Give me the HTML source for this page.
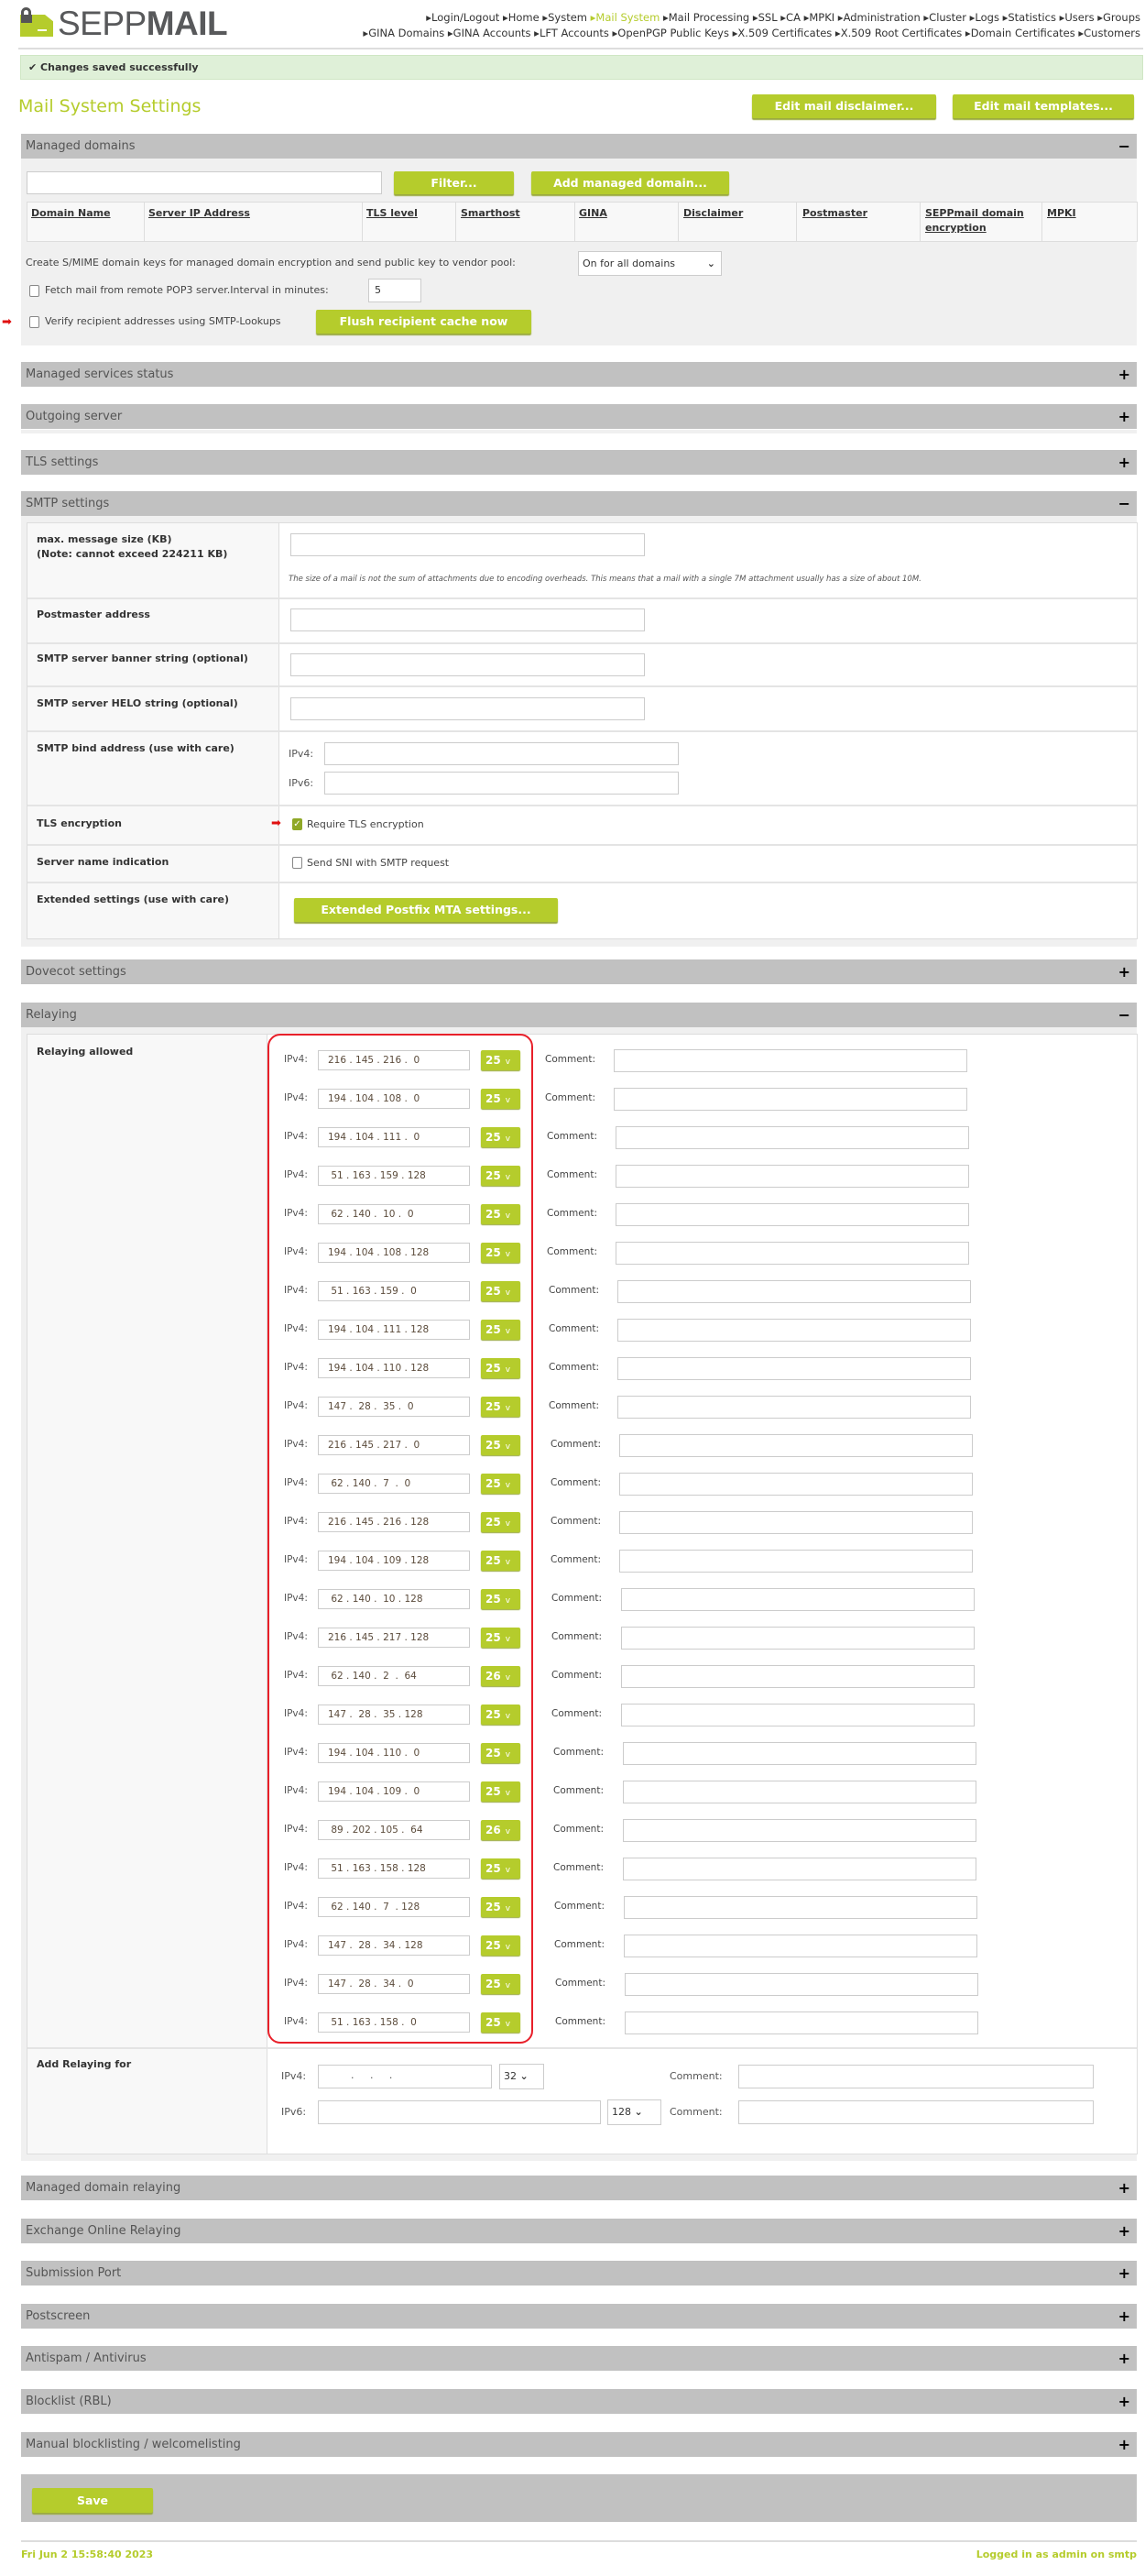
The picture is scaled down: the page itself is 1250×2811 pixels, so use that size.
<!DOCTYPE html>
<html><head><meta charset="utf-8"><style>
*{box-sizing:border-box}
body{margin:0;width:1250px;height:2811px;position:relative;background:#fff;font-family:"DejaVu Sans","Liberation Sans",sans-serif;font-size:11px;color:#333;overflow:hidden}
.a{position:absolute}
.h{position:absolute;left:23px;width:1218px;height:27px;background:#c1c1c1;color:#555;font-size:13px;line-height:27px;padding-left:5px}
.h b{position:absolute;right:7px;top:0;font-size:16px;color:#000;font-weight:bold}
.btn{position:absolute;background:#b5cc2c;color:#fff;font-weight:bold;font-size:12.5px;text-align:center;border-radius:2px;box-shadow:0 2px 1px #9aaa40}
.inp{position:absolute;background:#fff;border:1px solid #ccc;height:25px}
.sel{position:absolute;background:#fff;border:1px solid #ccc;font-size:11px;padding-left:4px}
.lbl{position:absolute;font-weight:bold;color:#333;font-size:11px}
.th span{text-decoration:underline}
.r{position:absolute;left:0;width:1250px;height:22px}
.r .l{position:absolute;left:310px;top:4px;color:#555;font-size:10.5px}
.r .ip{position:absolute;left:347px;top:0;width:166px;height:22px;border:1px solid #ccc;background:#fff;color:#5b4b3b;font-size:10.5px;line-height:20px;white-space:pre;padding-left:10px}
.r .pf{position:absolute;left:525px;top:0;width:43px;height:22px;background:#b5cc2c;color:#fff;font-weight:bold;font-size:12px;line-height:22px;padding-left:5px;border-radius:2px;box-shadow:0 1px 1px #9aaa40}
.r .pf i{font-style:normal;font-weight:normal;font-size:9px;margin-left:5px}
.r .cl{position:absolute;top:4px;color:#444;font-size:10.5px}
.r .ci{position:absolute;top:-1px;width:386px;height:25px;border:1px solid #ccc;background:#fff}
.cb{position:absolute;width:11px;height:13px;border:1px solid #888;border-radius:2px;background:#fff}
</style></head><body>

<!-- Logo -->
<div class="a" style="left:23px;top:8px;width:11px;height:12px;border:3px solid #555;border-radius:6px 6px 0 0;border-bottom:none"></div>
<div class="a" style="left:22px;top:16px;width:36px;height:24px;background:#b5cc2c;clip-path:polygon(0 0,75% 0,100% 30%,100% 100%,0 100%)"></div>
<div class="a" style="left:23px;top:16px;width:12px;height:9px;background:#555"></div>
<div class="a" style="left:41px;top:32px;width:10px;height:2px;background:#fff"></div>
<div class="a" style="left:63px;top:6px;font-family:'Liberation Sans',sans-serif;font-size:37px;color:#58595b;letter-spacing:-0.5px;line-height:40px"><span style="font-weight:normal">SEPP</span><span style="font-weight:bold">MAIL</span></div>

<!-- Nav -->
<div class="a" style="right:5px;top:11px;font-size:11.5px;white-space:nowrap;text-align:right;line-height:17px;color:#333">
▸Login/Logout ▸Home ▸System <span style="color:#b5cc2c">▸Mail System</span> ▸Mail Processing ▸SSL ▸CA ▸MPKI ▸Administration ▸Cluster ▸Logs ▸Statistics ▸Users ▸Groups<br>
▸GINA Domains ▸GINA Accounts ▸LFT Accounts ▸OpenPGP Public Keys ▸X.509 Certificates ▸X.509 Root Certificates ▸Domain Certificates ▸Customers</div>
<div class="a" style="left:20px;top:52px;width:1228px;height:2px;background:#ddd"></div>

<!-- success -->
<div class="a" style="left:22px;top:60px;width:1226px;height:27px;background:#dff0d8;border:1px solid #cfe6c4;font-weight:bold;font-size:11px;line-height:25px;padding-left:8px;color:#333">✔ Changes saved successfully</div>

<div class="a" style="left:20px;top:103px;font-size:19px;color:#b5cc2c;line-height:26px">Mail System Settings</div>
<div class="btn" style="left:821px;top:103px;width:201px;height:26px;line-height:26px">Edit mail disclaimer...</div>
<div class="btn" style="left:1040px;top:103px;width:198px;height:26px;line-height:26px">Edit mail templates...</div>

<!-- Managed domains -->
<div class="h" style="top:146px">Managed domains<b>−</b></div>
<div class="a" style="left:23px;top:173px;width:1218px;height:204px;background:#f0f0f0"></div>
<div class="inp" style="left:29px;top:187px;width:388px;height:25px"></div>
<div class="btn" style="left:430px;top:187px;width:131px;height:25px;line-height:25px">Filter...</div>
<div class="btn" style="left:580px;top:187px;width:216px;height:25px;line-height:25px">Add managed domain...</div>
<div class="a" style="left:29px;top:220px;width:1213px;height:44px;background:#f8f8f8;border:1px solid #ddd"></div>
<div class="a th" style="top:225px;left:0;width:1250px;font-weight:bold;font-size:11px;color:#333;line-height:16px">
<span class="a" style="left:34px">Domain Name</span><span class="a" style="left:162px">Server IP Address</span><span class="a" style="left:400px">TLS level</span><span class="a" style="left:503px">Smarthost</span><span class="a" style="left:632px">GINA</span><span class="a" style="left:746px">Disclaimer</span><span class="a" style="left:876px">Postmaster</span><span class="a" style="left:1010px">SEPPmail domain<br>encryption</span><span class="a" style="left:1143px">MPKI</span></div>
<div class="a" style="left:157px;top:221px;width:1px;height:42px;background:#ddd"></div>
<div class="a" style="left:395px;top:221px;width:1px;height:42px;background:#ddd"></div>
<div class="a" style="left:497px;top:221px;width:1px;height:42px;background:#ddd"></div>
<div class="a" style="left:627px;top:221px;width:1px;height:42px;background:#ddd"></div>
<div class="a" style="left:740px;top:221px;width:1px;height:42px;background:#ddd"></div>
<div class="a" style="left:869px;top:221px;width:1px;height:42px;background:#ddd"></div>
<div class="a" style="left:1004px;top:221px;width:1px;height:42px;background:#ddd"></div>
<div class="a" style="left:1137px;top:221px;width:1px;height:42px;background:#ddd"></div>
<div class="a" style="left:28px;top:280px;color:#444">Create S/MIME domain keys for managed domain encryption and send public key to vendor pool:</div>
<div class="sel" style="left:631px;top:274px;width:157px;height:27px;line-height:25px">On for all domains <span style="float:right;margin-right:6px;font-weight:bold">⌄</span></div>
<div class="cb" style="left:32px;top:311px"></div>
<div class="a" style="left:49px;top:310px;color:#444">Fetch mail from remote POP3 server.Interval in minutes:</div>
<div class="inp" style="left:402px;top:304px;width:58px;height:26px;padding:5px 0 0 6px">5</div>
<div class="a" style="left:2px;top:345px;color:#e01010;font-size:13px;line-height:13px">➡</div>
<div class="cb" style="left:32px;top:345px"></div>
<div class="a" style="left:49px;top:344px;color:#444">Verify recipient addresses using SMTP-Lookups</div>
<div class="btn" style="left:345px;top:338px;width:235px;height:26px;line-height:26px">Flush recipient cache now</div>

<div class="h" style="top:395px">Managed services status<b>+</b></div>
<div class="h" style="top:441px">Outgoing server<b>+</b></div>
<div class="a" style="left:23px;top:469px;width:1218px;height:4px;background:#f0f0f0"></div>
<div class="h" style="top:491px">TLS settings<b>+</b></div>

<!-- SMTP -->
<div class="h" style="top:536px">SMTP settings<b>−</b></div>
<div class="a" style="left:23px;top:563px;width:1218px;height:470px;background:#f0f0f0"></div>
<div class="a" style="left:29px;top:570px;width:1213px;height:455px;background:#fff;border:1px solid #ddd"></div>
<div class="a" style="left:30px;top:571px;width:275px;height:453px;background:#f8f8f8;border-right:1px solid #ddd"></div>
<div class="a" style="left:30px;top:652px;width:1211px;height:2px;background:#e4e4e4"></div>
<div class="a" style="left:30px;top:701px;width:1211px;height:2px;background:#e4e4e4"></div>
<div class="a" style="left:30px;top:748px;width:1211px;height:2px;background:#e4e4e4"></div>
<div class="a" style="left:30px;top:797px;width:1211px;height:2px;background:#e4e4e4"></div>
<div class="a" style="left:30px;top:878px;width:1211px;height:2px;background:#e4e4e4"></div>
<div class="a" style="left:30px;top:921px;width:1211px;height:2px;background:#e4e4e4"></div>
<div class="a" style="left:30px;top:962px;width:1211px;height:2px;background:#e4e4e4"></div>
<div class="lbl" style="left:40px;top:581px;line-height:16px">max. message size (KB)<br>(Note: cannot exceed 224211 KB)</div>
<div class="inp" style="left:317px;top:582px;width:387px"></div>
<div class="a" style="left:315px;top:627px;font-size:8.5px;font-style:italic;color:#555">The size of a mail is not the sum of attachments due to encoding overheads. This means that a mail with a single 7M attachment usually has a size of about 10M.</div>
<div class="lbl" style="left:40px;top:664px">Postmaster address</div>
<div class="inp" style="left:317px;top:664px;width:387px"></div>
<div class="lbl" style="left:40px;top:712px">SMTP server banner string (optional)</div>
<div class="inp" style="left:317px;top:713px;width:387px"></div>
<div class="lbl" style="left:40px;top:761px">SMTP server HELO string (optional)</div>
<div class="inp" style="left:317px;top:761px;width:387px"></div>
<div class="lbl" style="left:40px;top:810px">SMTP bind address (use with care)</div>
<div class="a" style="left:315px;top:816px;color:#555">IPv4:</div>
<div class="inp" style="left:354px;top:810px;width:387px"></div>
<div class="a" style="left:315px;top:848px;color:#555">IPv6:</div>
<div class="inp" style="left:354px;top:842px;width:387px"></div>
<div class="lbl" style="left:40px;top:892px">TLS encryption</div>
<div class="a" style="left:296px;top:892px;color:#e01010;font-size:13px;line-height:13px">➡</div>
<div class="a" style="left:319px;top:893px;width:11px;height:13px;background:#8fa828;border-radius:2px;color:#fff;font-size:10px;line-height:13px;text-align:center">✓</div>
<div class="a" style="left:335px;top:893px;color:#444">Require TLS encryption</div>
<div class="lbl" style="left:40px;top:934px">Server name indication</div>
<div class="cb" style="left:319px;top:935px"></div>
<div class="a" style="left:335px;top:935px;color:#444">Send SNI with SMTP request</div>
<div class="lbl" style="left:40px;top:975px">Extended settings (use with care)</div>
<div class="btn" style="left:321px;top:980px;width:288px;height:26px;line-height:26px">Extended Postfix MTA settings...</div>

<div class="h" style="top:1047px">Dovecot settings<b>+</b></div>

<!-- Relaying -->
<div class="h" style="top:1094px">Relaying<b>−</b></div>
<div class="a" style="left:23px;top:1121px;width:1218px;height:1237px;background:#f0f0f0"></div>
<div class="a" style="left:29px;top:1128px;width:1213px;height:1223px;background:#fff;border:1px solid #ddd"></div>
<div class="a" style="left:30px;top:1129px;width:262px;height:1221px;background:#f8f8f8;border-right:1px solid #ddd"></div>
<div class="a" style="left:30px;top:2234px;width:1211px;height:2px;background:#e4e4e4"></div>
<div class="lbl" style="left:40px;top:1141px">Relaying allowed</div>
<div class="a" style="left:292px;top:1128px;width:290px;height:1102px;border:2px solid #e8202a;border-radius:14px"></div>

<div class="r" style="top:1146px"><span class="l">IPv4:</span><span class="ip">216 . 145 . 216 .  0</span><span class="pf">25<i>v</i></span><span class="cl" style="left:595px">Comment:</span><span class="ci" style="left:670px"></span></div>
<div class="r" style="top:1188px"><span class="l">IPv4:</span><span class="ip">194 . 104 . 108 .  0</span><span class="pf">25<i>v</i></span><span class="cl" style="left:595px">Comment:</span><span class="ci" style="left:670px"></span></div>
<div class="r" style="top:1230px"><span class="l">IPv4:</span><span class="ip">194 . 104 . 111 .  0</span><span class="pf">25<i>v</i></span><span class="cl" style="left:597px">Comment:</span><span class="ci" style="left:672px"></span></div>
<div class="r" style="top:1272px"><span class="l">IPv4:</span><span class="ip"> 51 . 163 . 159 . 128</span><span class="pf">25<i>v</i></span><span class="cl" style="left:597px">Comment:</span><span class="ci" style="left:672px"></span></div>
<div class="r" style="top:1314px"><span class="l">IPv4:</span><span class="ip"> 62 . 140 .  10 .  0</span><span class="pf">25<i>v</i></span><span class="cl" style="left:597px">Comment:</span><span class="ci" style="left:672px"></span></div>
<div class="r" style="top:1356px"><span class="l">IPv4:</span><span class="ip">194 . 104 . 108 . 128</span><span class="pf">25<i>v</i></span><span class="cl" style="left:597px">Comment:</span><span class="ci" style="left:672px"></span></div>
<div class="r" style="top:1398px"><span class="l">IPv4:</span><span class="ip"> 51 . 163 . 159 .  0</span><span class="pf">25<i>v</i></span><span class="cl" style="left:599px">Comment:</span><span class="ci" style="left:674px"></span></div>
<div class="r" style="top:1440px"><span class="l">IPv4:</span><span class="ip">194 . 104 . 111 . 128</span><span class="pf">25<i>v</i></span><span class="cl" style="left:599px">Comment:</span><span class="ci" style="left:674px"></span></div>
<div class="r" style="top:1482px"><span class="l">IPv4:</span><span class="ip">194 . 104 . 110 . 128</span><span class="pf">25<i>v</i></span><span class="cl" style="left:599px">Comment:</span><span class="ci" style="left:674px"></span></div>
<div class="r" style="top:1524px"><span class="l">IPv4:</span><span class="ip">147 .  28 .  35 .  0</span><span class="pf">25<i>v</i></span><span class="cl" style="left:599px">Comment:</span><span class="ci" style="left:674px"></span></div>
<div class="r" style="top:1566px"><span class="l">IPv4:</span><span class="ip">216 . 145 . 217 .  0</span><span class="pf">25<i>v</i></span><span class="cl" style="left:601px">Comment:</span><span class="ci" style="left:676px"></span></div>
<div class="r" style="top:1608px"><span class="l">IPv4:</span><span class="ip"> 62 . 140 .  7  .  0</span><span class="pf">25<i>v</i></span><span class="cl" style="left:601px">Comment:</span><span class="ci" style="left:676px"></span></div>
<div class="r" style="top:1650px"><span class="l">IPv4:</span><span class="ip">216 . 145 . 216 . 128</span><span class="pf">25<i>v</i></span><span class="cl" style="left:601px">Comment:</span><span class="ci" style="left:676px"></span></div>
<div class="r" style="top:1692px"><span class="l">IPv4:</span><span class="ip">194 . 104 . 109 . 128</span><span class="pf">25<i>v</i></span><span class="cl" style="left:601px">Comment:</span><span class="ci" style="left:676px"></span></div>
<div class="r" style="top:1734px"><span class="l">IPv4:</span><span class="ip"> 62 . 140 .  10 . 128</span><span class="pf">25<i>v</i></span><span class="cl" style="left:602px">Comment:</span><span class="ci" style="left:678px"></span></div>
<div class="r" style="top:1776px"><span class="l">IPv4:</span><span class="ip">216 . 145 . 217 . 128</span><span class="pf">25<i>v</i></span><span class="cl" style="left:602px">Comment:</span><span class="ci" style="left:678px"></span></div>
<div class="r" style="top:1818px"><span class="l">IPv4:</span><span class="ip"> 62 . 140 .  2  .  64</span><span class="pf">26<i>v</i></span><span class="cl" style="left:602px">Comment:</span><span class="ci" style="left:678px"></span></div>
<div class="r" style="top:1860px"><span class="l">IPv4:</span><span class="ip">147 .  28 .  35 . 128</span><span class="pf">25<i>v</i></span><span class="cl" style="left:602px">Comment:</span><span class="ci" style="left:678px"></span></div>
<div class="r" style="top:1902px"><span class="l">IPv4:</span><span class="ip">194 . 104 . 110 .  0</span><span class="pf">25<i>v</i></span><span class="cl" style="left:604px">Comment:</span><span class="ci" style="left:680px"></span></div>
<div class="r" style="top:1944px"><span class="l">IPv4:</span><span class="ip">194 . 104 . 109 .  0</span><span class="pf">25<i>v</i></span><span class="cl" style="left:604px">Comment:</span><span class="ci" style="left:680px"></span></div>
<div class="r" style="top:1986px"><span class="l">IPv4:</span><span class="ip"> 89 . 202 . 105 .  64</span><span class="pf">26<i>v</i></span><span class="cl" style="left:604px">Comment:</span><span class="ci" style="left:680px"></span></div>
<div class="r" style="top:2028px"><span class="l">IPv4:</span><span class="ip"> 51 . 163 . 158 . 128</span><span class="pf">25<i>v</i></span><span class="cl" style="left:604px">Comment:</span><span class="ci" style="left:680px"></span></div>
<div class="r" style="top:2070px"><span class="l">IPv4:</span><span class="ip"> 62 . 140 .  7  . 128</span><span class="pf">25<i>v</i></span><span class="cl" style="left:605px">Comment:</span><span class="ci" style="left:681px"></span></div>
<div class="r" style="top:2112px"><span class="l">IPv4:</span><span class="ip">147 .  28 .  34 . 128</span><span class="pf">25<i>v</i></span><span class="cl" style="left:605px">Comment:</span><span class="ci" style="left:681px"></span></div>
<div class="r" style="top:2154px"><span class="l">IPv4:</span><span class="ip">147 .  28 .  34 .  0</span><span class="pf">25<i>v</i></span><span class="cl" style="left:606px">Comment:</span><span class="ci" style="left:682px"></span></div>
<div class="r" style="top:2196px"><span class="l">IPv4:</span><span class="ip"> 51 . 163 . 158 .  0</span><span class="pf">25<i>v</i></span><span class="cl" style="left:606px">Comment:</span><span class="ci" style="left:682px"></span></div>

<div class="lbl" style="left:40px;top:2246px">Add Relaying for</div>
<div class="a" style="left:307px;top:2259px;color:#555">IPv4:</div>
<div class="inp" style="left:347px;top:2253px;width:190px;height:26px;white-space:pre;padding:4px 0 0 0;font-size:11px;color:#555">          .     .     .</div>
<div class="sel" style="left:545px;top:2252px;width:49px;height:28px;line-height:26px">32 <b>⌄</b></div>
<div class="a" style="left:731px;top:2259px;color:#555">Comment:</div>
<div class="inp" style="left:806px;top:2253px;width:388px;height:26px"></div>
<div class="a" style="left:307px;top:2298px;color:#555">IPv6:</div>
<div class="inp" style="left:347px;top:2292px;width:309px;height:26px"></div>
<div class="sel" style="left:663px;top:2291px;width:59px;height:28px;line-height:26px">128 <b>⌄</b></div>
<div class="a" style="left:731px;top:2298px;color:#555">Comment:</div>
<div class="inp" style="left:806px;top:2292px;width:388px;height:26px"></div>

<div class="h" style="top:2374px">Managed domain relaying<b>+</b></div>
<div class="h" style="top:2421px">Exchange Online Relaying<b>+</b></div>
<div class="h" style="top:2467px">Submission Port<b>+</b></div>
<div class="h" style="top:2514px">Postscreen<b>+</b></div>
<div class="h" style="top:2560px">Antispam / Antivirus<b>+</b></div>
<div class="h" style="top:2607px">Blocklist (RBL)<b>+</b></div>
<div class="h" style="top:2654px">Manual blocklisting / welcomelisting<b>+</b></div>

<div class="a" style="left:23px;top:2700px;width:1218px;height:52px;background:#c1c1c1"></div>
<div class="btn" style="left:35px;top:2715px;width:132px;height:27px;line-height:27px">Save</div>

<div class="a" style="left:23px;top:2772px;width:1218px;height:2px;background:#ddd"></div>
<div class="a" style="left:23px;top:2781px;color:#b5cc2c;font-weight:bold;font-size:11px">Fri Jun 2 15:58:40 2023</div>
<div class="a" style="right:9px;top:2781px;color:#b5cc2c;font-weight:bold;font-size:11px">Logged in as admin on smtp</div>
</body></html>
